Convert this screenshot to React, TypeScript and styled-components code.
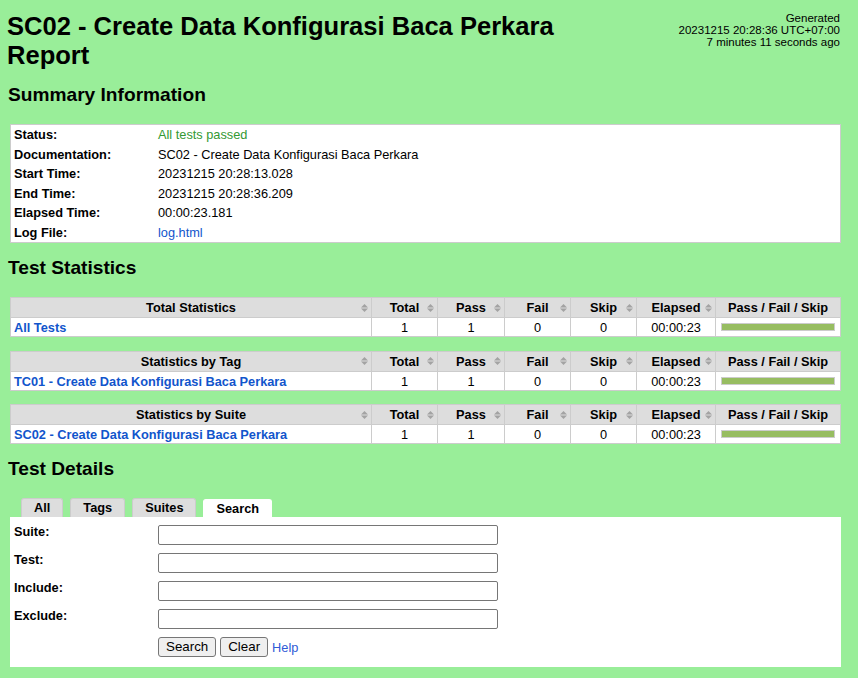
import React from 'react';
import styled, { createGlobalStyle } from 'styled-components';

const GlobalStyle = createGlobalStyle`
  html, body { margin: 0; padding: 0; }
  body {
    background: #99ee99;
    color: #000;
    font-family: "Liberation Sans", Arial, sans-serif;
    font-size: 12.77px;
    line-height: 15px;
  }
  a { color: #15c; text-decoration: none; }
`;

const Page = styled.div`
  padding: 12px 18px 11px 8px;
`;

const Header = styled.header`
  display: flex;
  justify-content: space-between;
  align-items: flex-start;
`;

const Title = styled.h1`
  margin: 0 0 0 -1px;
  width: 590px;
  font-size: 25.55px;
  line-height: 29px;
  font-weight: bold;
`;

const Generated = styled.div`
  text-align: right;
  font-size: 11.5px;
  line-height: 12px;
  white-space: nowrap;
`;

const SectionTitle = styled.h2`
  margin: 14px 0 18px 0;
  font-size: 19.15px;
  line-height: 22px;
  font-weight: bold;
`;

const DetailsTable = styled.table`
  width: 831px;
  margin: 0 0 14px 2px;
  border-collapse: collapse;
  border: 1px solid #ccc;
  background: #fff;
`;

const DetailsLabel = styled.th`
  width: 140px;
  text-align: left;
  vertical-align: top;
  white-space: nowrap;
  font-weight: bold;
  padding: 2.25px 2px 2.25px 3px;
`;

const DetailsValue = styled.td<{ $tone?: 'pass' }>`
  vertical-align: top;
  padding: 2.25px 2px;
  color: ${(p) => (p.$tone === 'pass' ? '#393' : 'inherit')};
`;

const StatTable = styled.table`
  width: 831px;
  margin: 0 0 13.5px 2px;
  border-collapse: collapse;
  table-layout: fixed;
  background: #fff;
`;

const StatCol = styled.col<{ $w?: number }>`
  width: ${(p) => (p.$w ? `${p.$w}px` : 'auto')};
`;

const StatHead = styled.th`
  position: relative;
  background: #ddd;
  border: 1px solid #ccc;
  padding: 2px 4px;
  font-weight: bold;
  text-align: center;
  white-space: nowrap;
`;

const SortIcon = styled.svg`
  position: absolute;
  right: 3px;
  top: 50%;
  margin-top: -4px;
  width: 7px;
  height: 8px;
`;

const StatCell = styled.td<{ $name?: boolean }>`
  border: 1px solid #ccc;
  padding: 2px 4px 1px ${(p) => (p.$name ? '3px' : '4px')};
  text-align: ${(p) => (p.$name ? 'left' : 'center')};
  font-weight: ${(p) => (p.$name ? 'bold' : 'normal')};
  white-space: nowrap;
  overflow: hidden;
`;

const GraphCell = styled.td`
  border: 1px solid #ccc;
  padding: 0 5px;
  vertical-align: middle;
`;

const Bar = styled.div`
  height: 6px;
  border: 1px solid #ccc;
  background: #97bd61;
`;

const Tabs = styled.div`
  display: flex;
  align-items: flex-end;
  gap: 7px;
  margin-left: 2px;
  padding-left: 11px;
`;

const Tab = styled.div<{ $selected?: boolean }>`
  background: ${(p) => (p.$selected ? '#fff' : '#ddd')};
  border: 1px solid ${(p) => (p.$selected ? '#fff' : '#ccc')};
  border-bottom: none;
  border-radius: 3px 3px 0 0;
  padding: 1px 12px ${(p) => (p.$selected ? '1px' : '2px')};
  font-weight: bold;
  cursor: pointer;
`;

const SearchPanel = styled.div`
  width: 831px;
  box-sizing: border-box;
  margin-left: 2px;
  background: #fff;
  padding: 8px 0 10px 4px;
  display: grid;
  grid-template-columns: 144px 340px;
  row-gap: 8px;
  align-items: start;
`;

const FieldLabel = styled.label`
  font-weight: bold;
  margin-top: -1px;
`;

const TextInput = styled.input`
  box-sizing: border-box;
  width: 340px;
  height: 20px;
  margin: 0;
  border: 1px solid #767676;
  border-radius: 2px;
  background: #fff;
  font-family: "Liberation Sans", Arial, sans-serif;
  font-size: 13px;
`;

const ButtonRow = styled.div`
  grid-column: 2;
  display: flex;
  align-items: center;
  gap: 4px;
`;

const Button = styled.button`
  box-sizing: border-box;
  height: 20px;
  margin: 0;
  padding: 0 7px;
  border: 1px solid #767676;
  border-radius: 3px;
  background: #efefef;
  color: #000;
  font-family: "Liberation Sans", Arial, sans-serif;
  font-size: 13.333px;
  line-height: 16px;
`;

const HelpLink = styled.a`
  color: #2f5bd6;
`;

const Sort = () => (
  <SortIcon viewBox="0 0 7 8">
    <path d="M0 3.4 L3.5 0 L7 3.4 Z" fill="#a3a3a3" />
    <path d="M0 4.6 L7 4.6 L3.5 8 Z" fill="#a3a3a3" />
  </SortIcon>
);

const statTables = [
  { title: 'Total Statistics', name: 'All Tests' },
  { title: 'Statistics by Tag', name: 'TC01 - Create Data Konfigurasi Baca Perkara' },
  { title: 'Statistics by Suite', name: 'SC02 - Create Data Konfigurasi Baca Perkara' },
];

const details: { label: string; value: string; tone?: 'pass'; link?: boolean }[] = [
  { label: 'Status:', value: 'All tests passed', tone: 'pass' },
  { label: 'Documentation:', value: 'SC02 - Create Data Konfigurasi Baca Perkara' },
  { label: 'Start Time:', value: '20231215 20:28:13.028' },
  { label: 'End Time:', value: '20231215 20:28:36.209' },
  { label: 'Elapsed Time:', value: '00:00:23.181' },
  { label: 'Log File:', value: 'log.html', link: true },
];

const fields = ['Suite:', 'Test:', 'Include:', 'Exclude:'];

export default function App() {
  return (
    <>
      <GlobalStyle />
      <Page>
        <Header>
          <Title>SC02 - Create Data Konfigurasi Baca Perkara Report</Title>
          <Generated>
            Generated
            <br />
            20231215 20:28:36 UTC+07:00
            <br />
            7 minutes 11 seconds ago
          </Generated>
        </Header>

        <SectionTitle>Summary Information</SectionTitle>
        <DetailsTable>
          <tbody>
            {details.map((d) => (
              <tr key={d.label}>
                <DetailsLabel>{d.label}</DetailsLabel>
                <DetailsValue $tone={d.tone}>
                  {d.link ? <a href="#log">{d.value}</a> : d.value}
                </DetailsValue>
              </tr>
            ))}
          </tbody>
        </DetailsTable>

        <SectionTitle>Test Statistics</SectionTitle>
        {statTables.map((t) => (
          <StatTable key={t.title}>
            <colgroup>
              <StatCol />
              <StatCol $w={66} />
              <StatCol $w={67} />
              <StatCol $w={66} />
              <StatCol $w={66} />
              <StatCol $w={79} />
              <StatCol $w={125} />
            </colgroup>
            <thead>
              <tr>
                <StatHead>{t.title}<Sort /></StatHead>
                <StatHead>Total<Sort /></StatHead>
                <StatHead>Pass<Sort /></StatHead>
                <StatHead>Fail<Sort /></StatHead>
                <StatHead>Skip<Sort /></StatHead>
                <StatHead>Elapsed<Sort /></StatHead>
                <StatHead>Pass / Fail / Skip</StatHead>
              </tr>
            </thead>
            <tbody>
              <tr>
                <StatCell $name><a href="#stat">{t.name}</a></StatCell>
                <StatCell>1</StatCell>
                <StatCell>1</StatCell>
                <StatCell>0</StatCell>
                <StatCell>0</StatCell>
                <StatCell>00:00:23</StatCell>
                <GraphCell><Bar /></GraphCell>
              </tr>
            </tbody>
          </StatTable>
        ))}

        <SectionTitle>Test Details</SectionTitle>
        <Tabs>
          <Tab>All</Tab>
          <Tab>Tags</Tab>
          <Tab>Suites</Tab>
          <Tab $selected>Search</Tab>
        </Tabs>
        <SearchPanel>
          {fields.map((f) => (
            <React.Fragment key={f}>
              <FieldLabel>{f}</FieldLabel>
              <TextInput type="text" />
            </React.Fragment>
          ))}
          <ButtonRow>
            <Button>Search</Button>
            <Button>Clear</Button>
            <HelpLink href="#help">Help</HelpLink>
          </ButtonRow>
        </SearchPanel>
      </Page>
    </>
  );
}
